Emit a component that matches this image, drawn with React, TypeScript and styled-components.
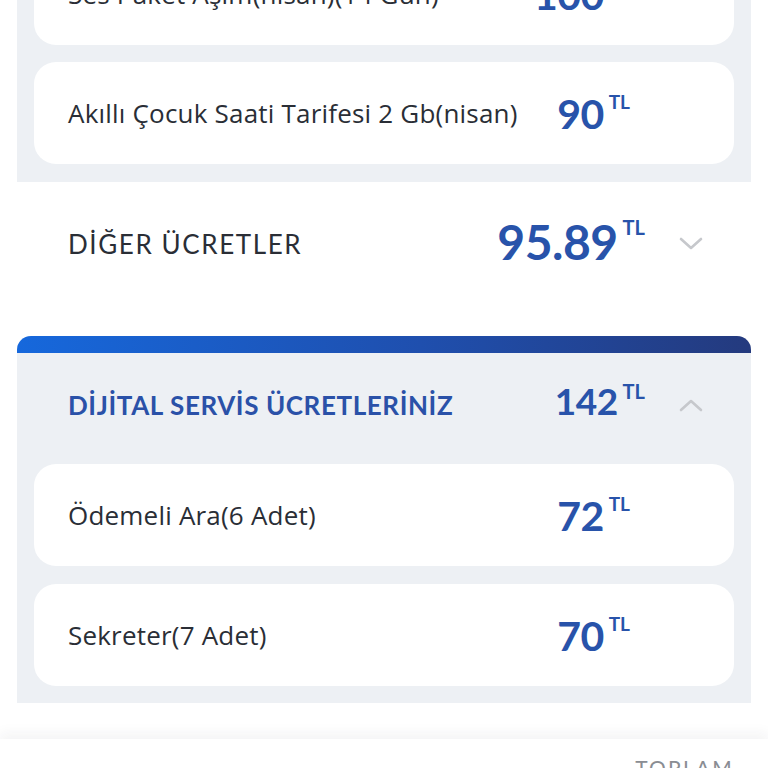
import React from "react";
import styled, { createGlobalStyle } from "styled-components";

const Global = createGlobalStyle`
  html, body {
    margin: 0;
    padding: 0;
    background: #ffffff;
    overflow: hidden;
    height: 768px;
  }
  * { box-sizing: border-box; }
  body {
    font-family: Lato, "Noto Sans", "DejaVu Sans", sans-serif;
    -webkit-font-smoothing: antialiased;
  }
`;

const Page = styled.div`
  display: flex;
  flex-direction: column;
  width: 768px;
`;

const Panel = styled.section<{ $shift?: number }>`
  display: flex;
  flex-direction: column;
  gap: 17px;
  margin: ${(p) => (p.$shift ? `-${p.$shift}px` : "0")} 17px 0;
  padding: 17px 17px 18px;
  background: #edf0f4;
`;

const ExpandedSection = styled.section`
  display: flex;
  flex-direction: column;
  margin: 0 17px;
  border-radius: 14px 14px 0 0;
  overflow: hidden;
  background: #edf0f4;
`;

const GradientBar = styled.div`
  height: 17px;
  background: linear-gradient(90deg, #1668dc 0%, #1f4fae 55%, #243a7e 100%);
`;

const SectionBody = styled.div`
  display: flex;
  flex-direction: column;
  gap: 18px;
  padding: 0 17px 17px;
`;

const Card = styled.div`
  display: flex;
  align-items: center;
  height: 102px;
  padding: 0 104px 0 34px;
  border-radius: 22px;
  background: #ffffff;
`;

const Label = styled.span`
  flex: 1;
  font-family: "Open Sans", "Noto Sans", sans-serif;
  font-size: 26px;
  color: #2a2e36;
  letter-spacing: 0.2px;
  white-space: nowrap;
`;

const HeaderRow = styled.div<{ $height: number; $shiftUp?: number }>`
  display: flex;
  align-items: center;
  height: ${(p) => p.$height}px;
  padding: 0 48px ${(p) => p.$shiftUp ?? 0}px 51px;
`;

const OpenRow = styled(HeaderRow)`
  margin: 0 17px 30px;
`;

const HeaderTitle = styled.span<{ $accent?: boolean }>`
  flex: 1;
  font-size: 26px;
  letter-spacing: ${(p) => (p.$accent ? 0.6 : 1.6)}px;
  font-weight: ${(p) => (p.$accent ? 700 : 400)};
  color: ${(p) => (p.$accent ? "#2a51a8" : "#2a2e36")};
  white-space: nowrap;
`;

const Amount = styled.span<{ $lift?: number }>`
  display: inline-flex;
  align-items: flex-start;
  color: #2853aa;
  font-weight: 700;
  margin-bottom: ${(p) => p.$lift ?? 0}px;
`;

const Digits = styled.span<{ $size: number }>`
  font-size: ${(p) => p.$size}px;
  line-height: 1;
  letter-spacing: -0.5px;
`;

const Currency = styled.span<{ $size: number }>`
  font-size: ${(p) => p.$size}px;
  line-height: 1;
  margin-left: 5px;
  margin-top: -1px;
`;

const Chevron = styled.svg`
  margin-left: 34px;
  flex: none;
`;

const Spacer = styled.div`
  height: 36px;
`;

const BottomBar = styled.footer`
  display: flex;
  justify-content: flex-end;
  height: 120px;
  padding: 16px 34px 0;
  background: #ffffff;
  box-shadow: 0 -6px 12px rgba(30, 40, 60, 0.05);
`;

const TotalLabel = styled.span`
  font-size: 21px;
  letter-spacing: 2.2px;
  color: #8a8d93;
`;

function Price({
  value,
  size,
  tl,
  lift,
}: {
  value: string;
  size: number;
  tl: number;
  lift?: number;
}) {
  return (
    <Amount $lift={lift}>
      <Digits $size={size}>{value}</Digits>
      <Currency $size={tl}>TL</Currency>
    </Amount>
  );
}

function ChevronIcon({ up }: { up?: boolean }) {
  return (
    <Chevron width="24" height="14" viewBox="0 0 24 14" fill="none">
      <polyline
        points={up ? "2,12 12,3 22,12" : "2,2 12,11 22,2"}
        stroke="#c6c8cc"
        strokeWidth="2.6"
        strokeLinecap="round"
        strokeLinejoin="round"
      />
    </Chevron>
  );
}

const topItems = [
  { label: "Ses Paket Aşım(nisan)(14 Gün)", value: "100" },
  { label: "Akıllı Çocuk Saati Tarifesi 2 Gb(nisan)", value: "90" },
];

const digitalItems = [
  { label: "Ödemeli Ara(6 Adet)", value: "72" },
  { label: "Sekreter(7 Adet)", value: "70" },
];

export default function App() {
  return (
    <>
      <Global />
      <Page>
        <Panel $shift={74}>
          {topItems.map((it) => (
            <Card key={it.label}>
              <Label>{it.label}</Label>
              <Price value={it.value} size={41} tl={19} />
            </Card>
          ))}
        </Panel>

        <OpenRow $height={124}>
          <HeaderTitle>DİĞER ÜCRETLER</HeaderTitle>
          <Price value="95.89" size={48} tl={20} lift={4} />
          <ChevronIcon />
        </OpenRow>

        <ExpandedSection>
          <GradientBar />
          <HeaderRow $height={111} $shiftUp={8}>
            <HeaderTitle $accent>DİJİTAL SERVİS ÜCRETLERİNİZ</HeaderTitle>
            <Price value="142" size={37} tl={20} lift={8} />
            <ChevronIcon up />
          </HeaderRow>
          <SectionBody>
            {digitalItems.map((it) => (
              <Card key={it.label}>
                <Label>{it.label}</Label>
                <Price value={it.value} size={41} tl={19} />
              </Card>
            ))}
          </SectionBody>
        </ExpandedSection>

        <Spacer />
        <BottomBar>
          <TotalLabel>TOPLAM</TotalLabel>
        </BottomBar>
      </Page>
    </>
  );
}
